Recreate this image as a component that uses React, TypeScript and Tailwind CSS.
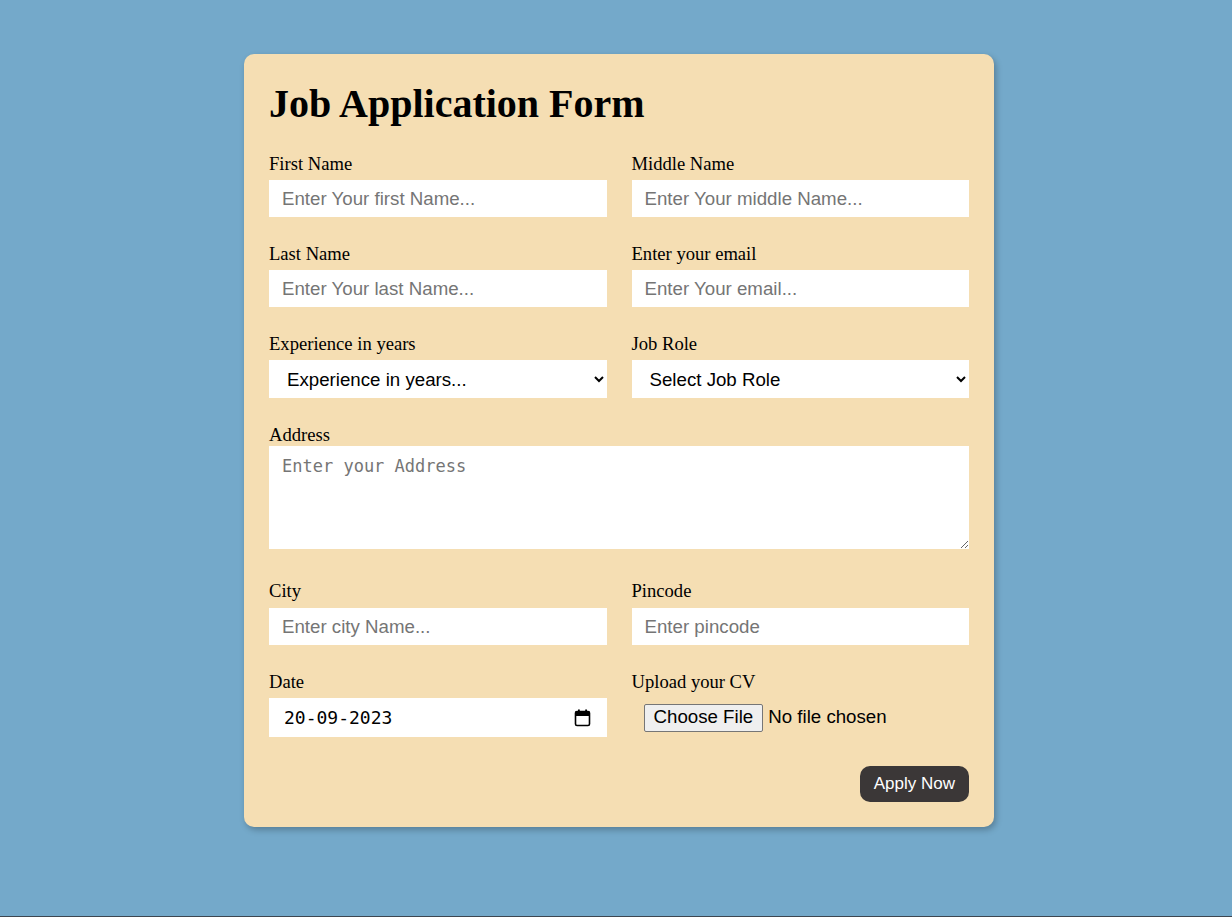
import { useState } from 'react';

const serif = "font-['Liberation_Serif','Times_New_Roman',serif]";
const sans = "font-['Liberation_Sans',Arial,sans-serif]";
const mono = "font-['DejaVu_Sans_Mono','Liberation_Mono',monospace]";

const labelCls = `block text-[18.6px] leading-[21px] text-black ${serif}`;
const inputBase = `block w-full h-[37px] bg-white pl-[13px] pr-[8px] text-[18.7px] text-black placeholder:text-[#757575] outline-none ${sans}`;
const selectCls = `block w-full h-[38px] mt-[6px] bg-white pl-[14px] pr-[4px] text-[18.7px] text-black outline-none ${sans}`;

function Field({ label, children }: { label: string; children: React.ReactNode }) {
    return (
        <div>
            <label className={labelCls}>{label}</label>
            {children}
        </div>
    );
}

function CalendarIcon() {
    return (
        <svg width="17" height="18" viewBox="0 0 17 18" aria-hidden>
            <rect x="4" y="0.5" width="1.8" height="3" fill="#000" />
            <rect x="11.2" y="0.5" width="1.8" height="3" fill="#000" />
            <rect x="1.5" y="2.5" width="14" height="14" rx="1.5" fill="none" stroke="#000" strokeWidth="1.6" />
            <rect x="1.5" y="2.5" width="14" height="4.5" fill="#000" />
        </svg>
    );
}

export default function App() {
    const [date, setDate] = useState('20-09-2023');

    return (
        <div className="h-[917px] bg-[#74a9ca] border-b border-[#3d4650] box-border overflow-hidden">
            <form
                onSubmit={e => e.preventDefault()}
                className="ml-[244px] mt-[54px] w-[750px] rounded-[10px] bg-[#f5deb3] p-[25px] shadow-[2px_3px_6px_rgba(0,0,0,0.25)]"
            >
                <h1 className={`text-[40px] leading-[50px] font-bold text-black mb-[24px] ${serif}`}>Job Application Form</h1>

                {/* Name + email */}
                <div className="grid grid-cols-2 gap-x-[25px] gap-y-[26px]">
                    <Field label="First Name">
                        <input className={`${inputBase} mt-[6px]`} placeholder="Enter Your first Name..." />
                    </Field>
                    <Field label="Middle Name">
                        <input className={`${inputBase} mt-[6px]`} placeholder="Enter Your middle Name..." />
                    </Field>
                    <Field label="Last Name">
                        <input className={`${inputBase} mt-[6px]`} placeholder="Enter Your last Name..." />
                    </Field>
                    <Field label="Enter your email">
                        <input className={`${inputBase} mt-[6px]`} type="email" placeholder="Enter Your email..." />
                    </Field>
                    <Field label="Experience in years">
                        <select defaultValue="" className={selectCls}>
                            <option value="" disabled>Experience in years...</option>
                            <option>0 - 1</option>
                            <option>1 - 3</option>
                            <option>3 - 5</option>
                            <option>5+</option>
                        </select>
                    </Field>
                    <Field label="Job Role">
                        <select defaultValue="" className={selectCls}>
                            <option value="" disabled>Select Job Role</option>
                            <option>Frontend Developer</option>
                            <option>Backend Developer</option>
                            <option>Designer</option>
                        </select>
                    </Field>
                </div>

                {/* Address */}
                <div className="mt-[26px]">
                    <label className={labelCls}>Address</label>
                    <textarea
                        className={`block w-full h-[103px] mt-[1px] bg-white px-[13px] pt-[8px] text-[17px] text-black placeholder:text-[#757575] outline-none ${mono}`}
                        placeholder="Enter your Address"
                    />
                </div>

                {/* City, pincode, date, cv */}
                <div className="grid grid-cols-2 gap-x-[25px] gap-y-[26px] mt-[31px]">
                    <Field label="City">
                        <input className={`${inputBase} mt-[7px]`} placeholder="Enter city Name..." />
                    </Field>
                    <Field label="Pincode">
                        <input className={`${inputBase} mt-[7px]`} placeholder="Enter pincode" />
                    </Field>
                    <Field label="Date">
                        <div className="flex items-center h-[39px] mt-[6px] bg-white pl-[15px] pr-[16px]">
                            <input
                                value={date}
                                onChange={e => setDate(e.target.value)}
                                className={`flex-1 min-w-0 text-[18px] text-black outline-none ${mono}`}
                            />
                            <CalendarIcon />
                        </div>
                    </Field>
                    <Field label="Upload your CV">
                        <div className={`flex items-center h-[39px] mt-[6px] pl-[12px] text-[18.7px] text-black ${sans}`}>
                            <button type="button" className="h-[28px] px-[9px] bg-[#efefef] border border-[#767676] rounded-[2px] leading-none">
                                Choose File
                            </button>
                            <span className="ml-[5px]">No file chosen</span>
                        </div>
                    </Field>
                </div>

                <div className="flex justify-end mt-[29px]">
                    <button type="submit" className={`h-[36px] px-[14px] rounded-[10px] bg-[#3b3737] text-white text-[17px] ${sans}`}>
                        Apply Now
                    </button>
                </div>
            </form>
        </div>
    );
}
